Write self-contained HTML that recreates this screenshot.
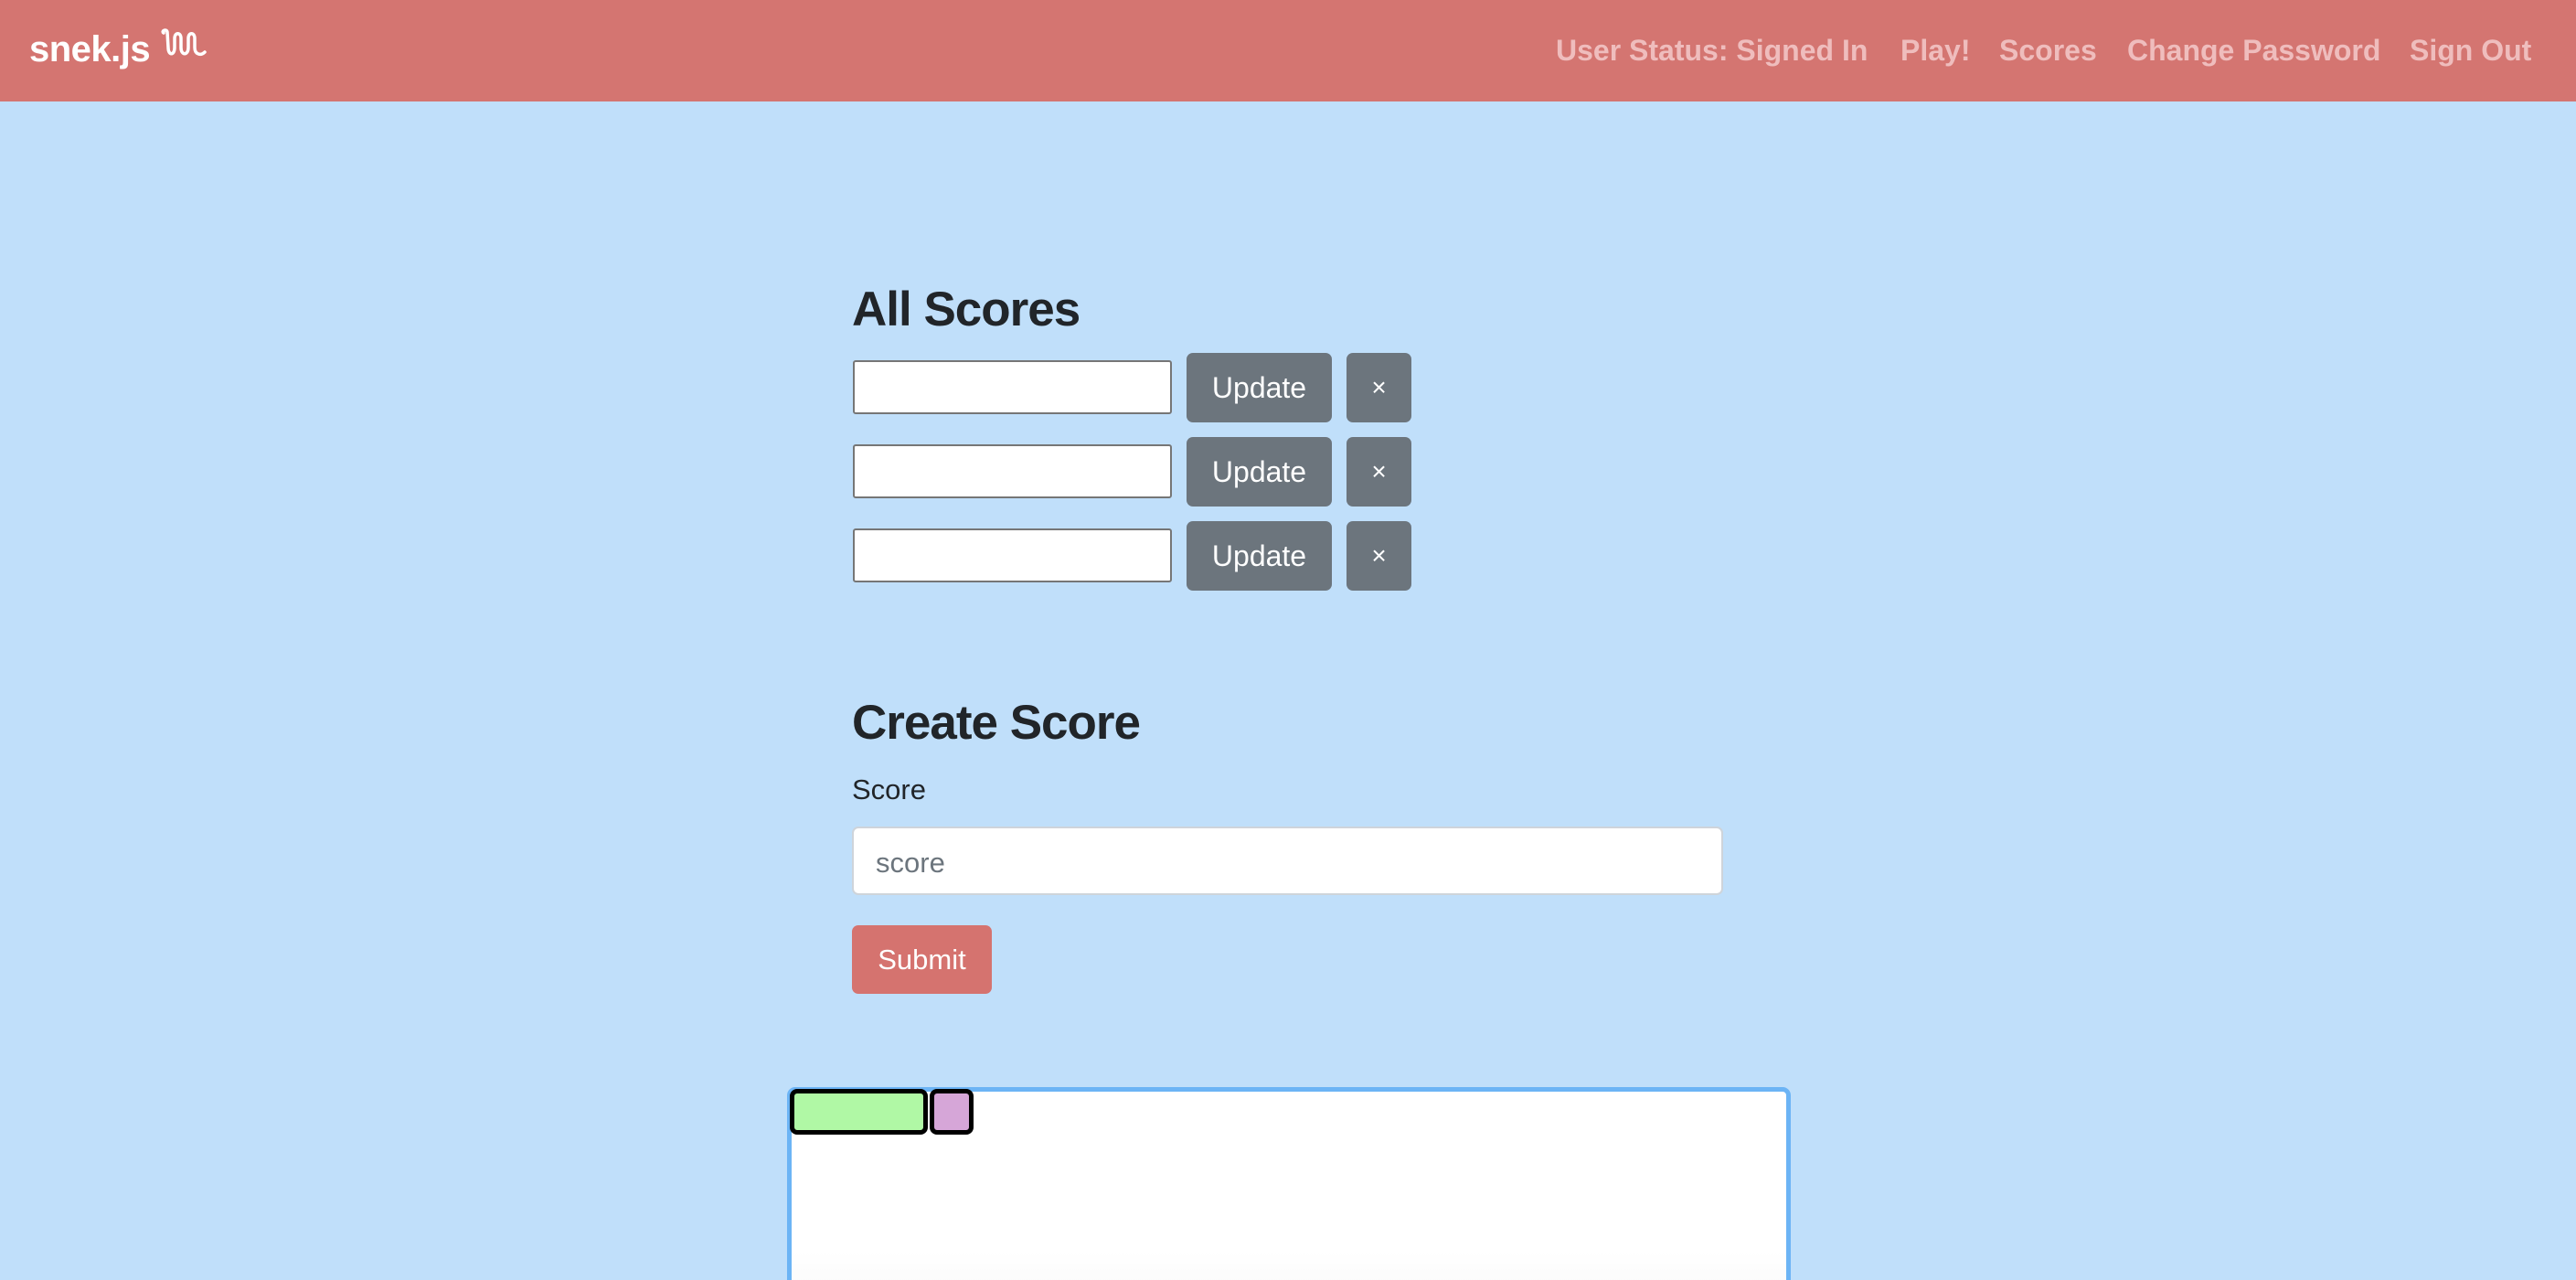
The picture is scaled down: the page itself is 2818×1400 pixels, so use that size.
<!DOCTYPE html>
<html><head><meta charset="utf-8"><style>
*{box-sizing:border-box;margin:0;padding:0}
html,body{width:2818px;height:1400px;overflow:hidden}
body{background:#c0dffa;font-family:"Liberation Sans",Arial,sans-serif;position:relative}
.nav{position:absolute;left:0;top:0;width:2818px;height:111px;background:#d47571}
.logo{position:absolute;left:32px;top:32px;font-size:40px;font-weight:bold;color:#fff;letter-spacing:-0.5px}
.snake{position:absolute;left:174px;top:30px}
.nl{position:absolute;top:37px;font-size:32px;font-weight:bold;color:#efbdbd;white-space:nowrap}
h2{position:absolute;left:932px;font-size:53px;font-weight:bold;color:#212529;letter-spacing:-1px}
.in{position:absolute;left:933px;width:349px;height:59px;background:#fff;border:2px solid #767676;border-radius:3px}
.btn{position:absolute;height:76px;background:#6c757d;border-radius:7px;color:#fff;font-size:32px;display:flex;align-items:center;justify-content:center}
.lab{position:absolute;left:932px;top:846px;font-size:31px;color:#212529}
.sc{position:absolute;left:932px;top:904px;width:953px;height:75px;background:#fff;border:2px solid #ced4da;border-radius:7px;font-size:31px;color:#6c757d;padding:20px 0 0 24px}
.sub{position:absolute;left:932px;top:1012px;width:153px;height:75px;background:#d5736f;border-radius:7px;color:#fff;font-size:31px;display:flex;align-items:center;justify-content:center}
.cv{position:absolute;left:861px;top:1189px;width:1098px;height:260px;border:5px solid #6cb4f5;border-radius:9px;background:linear-gradient(#fff 70%,#f6f6f6)}
.r{position:absolute;top:-3px;height:50px;border:5px solid #000;border-radius:8px}
</style></head><body>
<div class="nav">
<div class="logo">snek.js</div>
<svg class="snake" width="52" height="36" viewBox="0 0 52 36"><path d="M5 6 C2 4 8 1 9 5 L10 22 C10 31 17 31 17 22 L17 12 C17 5 24 5 24 12 L24 22 C24 31 32 31 32 22 L32 12 C32 5 39 5 39 12 L39 22 C39 30 46 31 50 27" fill="none" stroke="#fff" stroke-width="3.5" stroke-linecap="round"/></svg>
<div class="nl" style="left:1702px">User Status: Signed In</div>
<div class="nl" style="left:2079px">Play!</div>
<div class="nl" style="left:2187px">Scores</div>
<div class="nl" style="left:2327px">Change Password</div>
<div class="nl" style="left:2636px">Sign Out</div>
</div>
<h2 style="top:308px">All Scores</h2>
<div class="in" style="top:394px"></div><div class="btn" style="left:1298px;top:386px;width:159px">Update</div><div class="btn" style="left:1473px;top:386px;width:71px;font-size:28px">×</div>
<div class="in" style="top:486px"></div><div class="btn" style="left:1298px;top:478px;width:159px">Update</div><div class="btn" style="left:1473px;top:478px;width:71px;font-size:28px">×</div>
<div class="in" style="top:578px"></div><div class="btn" style="left:1298px;top:570px;width:159px">Update</div><div class="btn" style="left:1473px;top:570px;width:71px;font-size:28px">×</div>
<h2 style="top:760px">Create Score</h2>
<div class="lab">Score</div>
<div class="sc">score</div>
<div class="sub">Submit</div>
<div class="cv">
<div class="r" style="left:-2px;width:151px;background:#b0f8a5"></div>
<div class="r" style="left:151px;width:48px;background:#d6a6d8"></div>
</div>
</body></html>
